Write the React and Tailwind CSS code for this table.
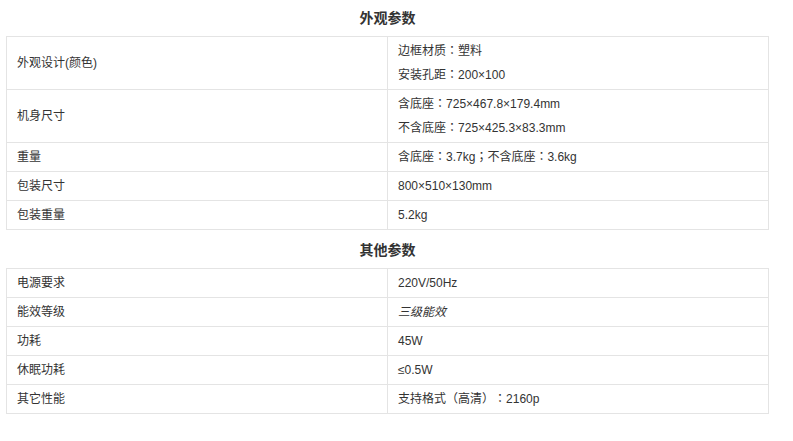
export default function App() {
  const font = { fontFamily: '"Liberation Sans", "Noto Sans CJK SC", sans-serif' };
  const t1 = [
    { k: "外观设计(颜色)", v: ["边框材质：塑料", "安装孔距：200×100"] },
    { k: "机身尺寸", v: ["含底座：725×467.8×179.4mm", "不含底座：725×425.3×83.3mm"] },
    { k: "重量", v: ["含底座：3.7kg；不含底座：3.6kg"] },
    { k: "包装尺寸", v: ["800×510×130mm"] },
    { k: "包装重量", v: ["5.2kg"] },
  ];
  const t2 = [
    { k: "电源要求", v: ["220V/50Hz"] },
    { k: "能效等级", v: ["三级能效"], italic: true },
    { k: "功耗", v: ["45W"] },
    { k: "休眠功耗", v: ["≤0.5W"] },
    { k: "其它性能", v: ["支持格式（高清）：2160p"] },
  ];
  const Punct = ({ text }) =>
    text.split(/([：；（）])/).map((p, i) =>
      /^[：；（）]$/.test(p) ? (
        <span
          key={i}
          className="leading-[0] [text-spacing-trim:space-all]"
          style={{ fontFamily: '"Noto Sans CJK TC", sans-serif' }}
        >
          {p}
        </span>
      ) : (
        <span key={i}>{p}</span>
      )
    );
  const Table = ({ rows, className }) => (
    <div className={"ml-[6px] w-[763px] border-t border-l border-[#e4e4e4] " + (className || "")}>
      {rows.map((r, i) => (
        <div key={i} className="flex border-b border-[#e4e4e4]">
          <div className="w-[381px] shrink-0 border-r border-[#e4e4e4] flex items-center pl-[10px]">
            {r.k}
          </div>
          <div
            className={
              "flex-1 border-r border-[#e4e4e4] pl-[10px] [text-spacing-trim:space-all] " +
              (r.v.length > 1 ? "py-[2px] leading-6" : "py-[5px] leading-[18px]")
            }
          >
            {r.v.map((line, j) =>
              r.italic ? (
                <div key={j}>
                  <em className="italic">{line}</em>
                </div>
              ) : (
                <div key={j}>
                  <Punct text={line} />
                </div>
              )
            )}
          </div>
        </div>
      ))}
    </div>
  );
  return (
    <div className="w-[793px] h-[441px] bg-white text-[12px] text-[#333]" style={font}>
      <div className="w-[775px] h-9 flex items-center justify-center text-[14px] font-bold text-[#333]">
        外观参数
      </div>
      <Table rows={t1} className="mb-[2px]" />
      <div className="w-[775px] h-9 flex items-center justify-center text-[14px] font-bold text-[#333]">
        其他参数
      </div>
      <Table rows={t2} />
    </div>
  );
}
